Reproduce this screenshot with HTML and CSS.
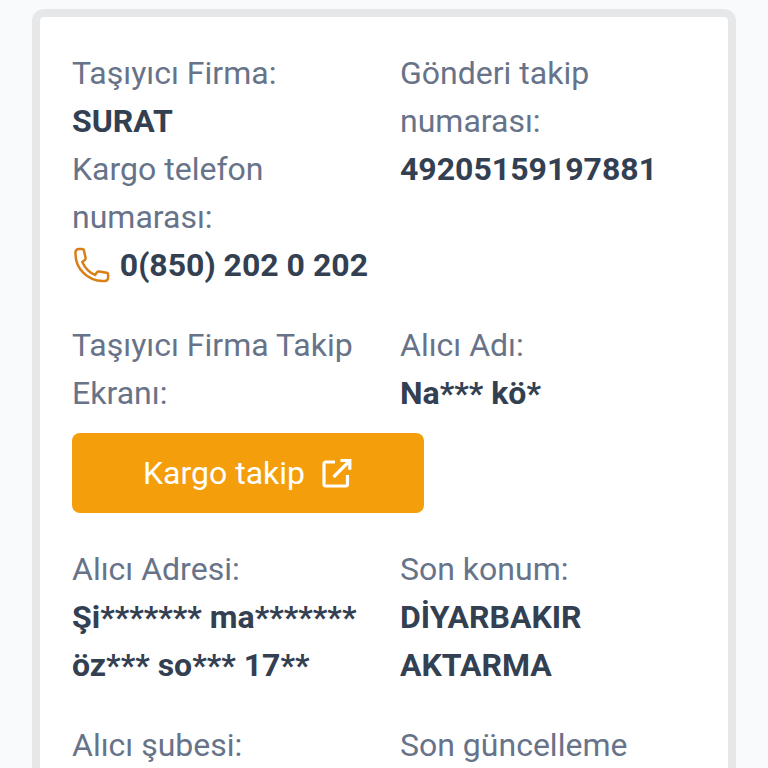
FILE: index.html
```
<!DOCTYPE html>
<html lang="tr">
<head>
  <meta charset="UTF-8">
  <title>Kargo takip</title>
  <link rel="stylesheet" href="styles.css">
</head>
<body>
  <div class="card">
    <div class="item">
      <p class="label">Taşıyıcı Firma:</p>
      <p class="value">SURAT</p>
      <p class="label">Kargo telefon numarası:</p>
      <a class="phone">
        <svg class="phone-icon" viewBox="0 0 24 24"><path d="M2.1 5.2C2.1 14.2 9.4 21.7 18.6 21.7h1.2a2 2 0 0 0 2-2v-1.8c0-.6-.4-1.1-1-1.2l-4.4-.8c-.5-.1-1 .1-1.3.5l-1.2 1.6C10.600 16.700 7.800 13.700 6.200 10.200l1.600-1.300c.4-.3.500-.7.400-1.200L7.200 3.200a1.200 1.200 0 0 0-1.200-.9H4.100a2 2 0 0 0-2 2Z"/></svg>
        <span class="value">0(850) 202 0 202</span>
      </a>
    </div>
    <div class="item">
      <p class="label">Gönderi takip numarası:</p>
      <p class="value">49205159197881</p>
    </div>
    <div class="item">
      <p class="label">Taşıyıcı Firma Takip Ekranı:</p>
      <a class="track-btn">
        <span>Kargo takip</span>
        <svg class="link-icon" viewBox="0 0 32 32"><path d="M14 5H5a2 2 0 0 0-2 2v20a2 2 0 0 0 2 2h19.500a2 2 0 0 0 2-2v-9M12.500 20 28 4.500M19.500 3.500h9.300v9.300"/></svg>
      </a>
    </div>
    <div class="item">
      <p class="label">Alıcı Adı:</p>
      <p class="value">Na*** kö*</p>
    </div>
    <div class="item">
      <p class="label">Alıcı Adresi:</p>
      <p class="value">Şi******* ma******* öz*** so*** 17**</p>
    </div>
    <div class="item">
      <p class="label">Son konum:</p>
      <p class="value">DİYARBAKIR AKTARMA</p>
    </div>
    <div class="item">
      <p class="label">Alıcı şubesi:</p>
    </div>
    <div class="item">
      <p class="label">Son güncelleme</p>
    </div>
  </div>
</body>
</html>
```

FILE: styles.css
```
body {
  margin: 0;
  height: 768px;
  overflow: hidden;
  background-color: #f8fafc;
  font-family: Roboto, "Noto Sans", sans-serif;
  font-size: 32px;
  line-height: 48px;
}

.card {
  display: grid;
  grid-template-columns: 296px 296px;
  gap: 32px;
  align-content: start;
  box-sizing: border-box;
  width: 704px;
  height: 900px;
  margin: 9px auto 0;
  padding: 32px;
  background-color: #fff;
  border: 8px solid #e5e7e9;
  border-radius: 12px;
}

p {
  margin: 0;
}

.label {
  color: #677389;
}

.value {
  color: #334052;
  font-weight: bold;
}

.phone {
  display: flex;
  align-items: center;
  gap: 8px;
  white-space: nowrap;
}

.phone-icon {
  width: 40px;
  height: 40px;
  fill: none;
  stroke: #d97f16;
  stroke-width: 1.5;
  stroke-linecap: round;
  stroke-linejoin: round;
}

.track-btn {
  display: flex;
  align-items: center;
  justify-content: center;
  gap: 16px;
  width: 352px;
  height: 80px;
  margin-top: 16px;
  border-radius: 8px;
  background-color: #f59e0b;
  color: #fff;
}

.link-icon {
  width: 32px;
  height: 32px;
  fill: none;
  stroke: #fff;
  stroke-width: 3.2;
}
```
